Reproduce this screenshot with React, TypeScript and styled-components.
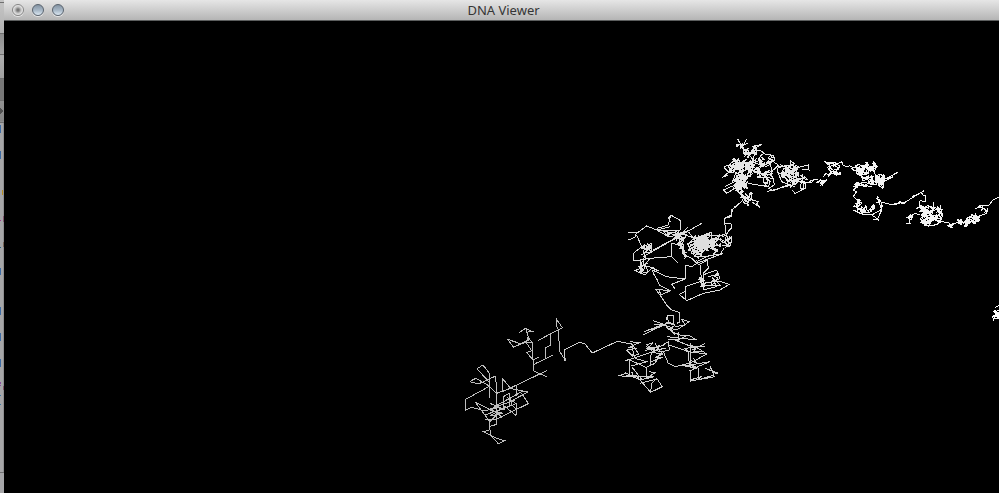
import React from "react";
import styled, { createGlobalStyle } from "styled-components";

const GlobalStyle = createGlobalStyle`
  * { box-sizing: border-box; }
  body { margin: 0; background: #000; font-family: "Noto Sans", sans-serif; overflow: hidden; }
`;

const Desktop = styled.div`
  display: flex;
  min-height: 100vh;
`;

const BackWindow = styled.div`
  flex: 0 0 4px;
  display: flex;
  background: linear-gradient(#c5c5c5 0, #b2b2b2 33px, #8e8e8e 34px, #a5a5a5 54px, #adadad 56px, #a0a0a0 78px, #777 79px, #777 100px, #929292 101px, #858585 121px, #a6a6a8 123px);
`;

const Edge = styled.svg`
  display: block;
  width: 100%;
  height: 100vh;
`;

const Window = styled.main`
  flex: 1;
  min-width: 0;
  display: flex;
  flex-direction: column;
  background: #000;
`;

const TitleBar = styled.header`
  display: grid;
  grid-template-columns: 1fr auto 1fr;
  align-items: center;
  height: 21px;
  padding-left: 8px;
  padding-right: 4px;
  background: linear-gradient(#e6e6e6, #b5b5b5);
  border-bottom: 1px solid #5c5e5e;
`;

const Controls = styled.div`
  display: flex;
  gap: 8px;
`;

const ControlButton = styled.button<{ $kind: "close" | "plain" }>`
  width: 12px;
  height: 12px;
  padding: 0;
  border: 1px solid ${(p) => (p.$kind === "close" ? "#858585" : "#59636e")};
  border-radius: 50%;
  box-shadow: 0 1px 0 #e6e6e6;
  background: ${(p) =>
    p.$kind === "close"
      ? "radial-gradient(circle at 50% 50%, #777 0, #777 1px, #c0c0c0 3px, #ededed 5px)"
      : "linear-gradient(#8594a3, #a9b9c8 55%, #dce8f2)"};
`;

const Title = styled.h1`
  margin: 0;
  color: #353535;
  font-size: 13px;
  font-weight: 400;
  line-height: 20px;
`;

const Viewport = styled.svg`
  flex: 1;
  display: block;
  width: 100%;
  min-height: 0;
  background: #000;
`;

/* Tangle of short steps that drifts from anchor to anchor inside an ellipse. */
function tangle(cx: number, cy: number, rx: number, ry: number, steps: number, seed: number, stride = 11) {
  let s = seed * 7919 + 17;
  const rnd = () => {
    s = (s * 1103515245 + 12345) % 2147483648;
    return s / 2147483648;
  };
  let x = cx;
  let y = cy;
  let ax = cx;
  let ay = cy;
  let d = `M${x} ${y}`;
  for (let i = 0; i < steps; i++) {
    if (i % 6 === 0) {
      const angle = rnd() * Math.PI * 2;
      const reach = Math.pow(rnd(), 0.4);
      ax = cx + Math.cos(angle) * reach * rx * 1.15;
      ay = cy + Math.sin(angle) * reach * ry * 1.15;
    }
    x = Math.round(x + (ax - x) * 0.4 + (rnd() - 0.5) * stride * 1.6);
    y = Math.round(y + (ay - y) * 0.4 + (rnd() - 0.5) * stride * 1.6);
    d += `L${x} ${y}`;
  }
  return d;
}

type Segment = { x: number; y: number; color: string; paths: string[] };

/* Each stretch of the strand uses a local grid of three units per pixel. */
const strand: Segment[] = [
  {
    x: 451, y: 289, color: "#bdbdbd",
    paths: [
      "M158 88L176 112L225 88M158 88L193 100L232 97M193 67L212 55L231 64L215 67L221 85L232 97L232 150M212 55L220 80L213 97L230 122L215 128L235 150L235 182L252 190L275 200M275 182L252 193L160 237M249 92L287 71L287 106L271 113L271 147L240 161M238 163L293 136M235 150L251 142M287 71L322 53L304 27L304 48L311 60L313 123L333 154L328 140L328 120L360 103",
      "M66 176L84 165L103 190L103 263M66 176L103 217M44 215L62 205L103 228M44 215L70 222L122 198L125 250L125 343L103 350M32 268L103 229L125 250L160 237M32 268L32 301L50 292L90 303L125 290M142 205L142 245L165 235L218 246L160 278M142 205L168 237M183 226L183 258M200 250L220 281L125 327L90 330",
      "M61 277L105 335L130 310L61 277M61 277L90 315L180 283M145 296L145 260L163 250L163 292M155 262L185 282L183 316L150 290L105 318L145 310L106 302L125 290L180 270M105 280L150 300L118 290L140 322L120 305M165 260L170 285L186 300M105 335L103 360L85 365L108 377L103 350M108 377L130 401L148 392L125 385L108 377M125 250L160 237M115 292L200 245L218 246",
    ],
  },
  {
    x: 556, y: 259, color: "#cfcfcf",
    paths: [
      "M15 244L13 210L58 187L75 192L97 219L172 184L215 192",
      "M210 185L238 188L205 203L232 205L200 210L218 228L236 222L215 190L222 228L197 210M196 242L235 230L310 205M208 240L210 290L175 287L200 280L240 300L283 290L210 290M210 240L258 262L260 295L285 278L268 275M258 262L285 250L305 215M197 285L230 288L240 300L272 337L307 320L290 295L275 310L272 337M215 260L245 298M215 275L222 292L196 278M240 310L290 297M214 258L260 245L225 235",
      "M258 195L280 188L262 205L300 200L325 185L328 210L305 215L280 210L270 230L270 255M272 245L310 232L285 232L310 222L280 218M285 190L300 215L258 200M310 215L325 250L345 260L385 250L415 265M328 195L385 215L440 222L390 250M322 170L410 180L385 165L355 180M345 180L395 200L435 198L375 205L385 215L388 255L412 265L360 255M390 190L390 265M440 222L415 205L390 195M400 235L412 250L390 240M372 258L450 245L400 265L415 262L390 272L392 303L465 290M390 300L425 290L412 298M415 265L415 298M435 265L475 280L458 278L450 258L462 285L420 298M395 210L435 190",
      "M250 165L300 140L252 155L325 128L290 145M280 122L310 132L282 135M320 105L340 105L340 130L325 128L322 105M310 135L330 140L345 165L330 145L350 150L388 125L365 118L375 135L345 140M318 140L335 155L360 165L385 165L410 180M355 155L355 180L325 178M350 130L357 127L357 97L335 90L322 78L302 48L287 28L332 32L302 45L298 30M332 32L298 15L292 0",
      "M262 195L275 210L300 195L290 210L318 205M255 212L285 203L312 195M318 128L345 135L330 148M390 205L412 200L400 215L425 215",
    ],
  },
  {
    x: 616, y: 184, color: "#dddddd",
    paths: [
      "M140 345L142 330L160 332M112 225L100 205L97 195L140 215L195 222L155 238L165 252M195 222L195 180L215 185L235 172M25 82L50 82L45 97L25 105M50 85L80 63L110 75L150 65M50 90L65 125L40 145L40 165L60 165L62 190L45 197L75 210L95 190L118 198M112 70L145 60L152 30L145 40L152 50M152 30L182 47L180 75L110 75",
      "M70 155L245 55M100 135L210 75L185 85L150 110M110 75L145 95L180 90L205 65M175 75L180 120L155 115L155 155L90 160M155 155L175 175M65 125L95 115L95 140L70 145L75 120L90 130L65 150M60 165L90 160L75 180L85 200L65 205L65 180L105 190M180 120L195 150L190 125L160 115M195 150L215 160L230 175L310 145M205 80L220 100L205 120M180 85L225 100L255 90L305 90M230 165L235 180",
      tangle(166, 98, 32, 18, 70, 3), tangle(80, 128, 20, 20, 28, 5),
      tangle(255, 113, 34, 20, 210, 2), tangle(238, 132, 52, 24, 95, 4), tangle(305, 108, 20, 26, 36, 8),
      tangle(75, 180, 20, 23, 26, 9), tangle(190, 130, 20, 25, 28, 12),
      "M285 98L320 85L315 110L335 95L332 122L305 120M315 85L315 60L312 40L335 35L335 15L355 0M195 245L245 228L240 180M195 245L198 285L178 268L195 260M178 268L200 287L250 265L300 255L328 238L295 228L250 235M248 210L290 195L295 208L265 215M235 180L262 165L265 190L250 205L250 255L290 245L275 215L300 240L250 240M230 170L265 152L300 148L312 130",
      tangle(267, 232, 30, 26, 44, 11),
    ],
  },
  {
    x: 711, y: 109, color: "#e6e6e6",
    paths: [
      tangle(80, 42, 11, 8, 24, 1, 8), "M68 27L78 45L63 43M95 27L85 45L98 40M84 50L86 68L104 75",
      tangle(108, 72, 22, 18, 52, 7), tangle(98, 98, 30, 14, 90, 6), tangle(57, 112, 24, 22, 90, 8), tangle(80, 160, 23, 24, 180, 9), tangle(82, 202, 18, 15, 60, 10), tangle(82, 125, 40, 18, 60, 28),
      tangle(152, 100, 22, 20, 42, 11), tangle(145, 140, 32, 22, 48, 12),
      tangle(228, 138, 24, 24, 120, 13), tangle(215, 118, 28, 13, 45, 14), tangle(250, 155, 20, 18, 34, 30),
      "M110 50L140 43L112 60L135 60L148 70L135 78L148 88L120 95M150 75L168 73L160 85L190 105L175 120M120 100L140 105L165 100L172 125L140 130L120 115M115 125L150 135L165 155L160 170L100 160M125 140L175 145L178 165L160 175L175 182L225 162M155 185L230 165M190 110L235 105L240 115L280 105L282 120L260 118M190 130L200 155L240 170M245 145L270 155L272 175L240 190L232 180M260 155L280 158L288 152L300 148",
      "M40 135L22 142L48 122M60 165L25 180L35 190L60 175M30 170L60 155M38 108L60 90M95 205L130 215L125 222L135 232L110 215M80 215L60 230L52 240L50 255L28 265L30 280L48 282L48 295L35 310",
    ],
  },
  {
    x: 796, y: 129, color: "#f4f4f4",
    paths: [
      "M0 95L12 95L22 99L35 97L42 90L55 89M0 122L15 115L17 100L0 95M70 80L78 70L88 76L112 60L120 45M80 52L100 46L125 35L130 47L142 50L148 47L158 52L185 55",
      tangle(66, 90, 13, 11, 32, 1, 8), tangle(94, 66, 17, 13, 36, 2, 8), tangle(103, 46, 25, 7, 40, 3, 7),
      tangle(185, 57, 21, 16, 130, 4, 8), tangle(215, 50, 20, 16, 44, 5, 9), tangle(210, 83, 22, 19, 60, 6, 8), tangle(243, 91, 15, 14, 110, 7, 8), tangle(163, 103, 7, 10, 18, 8, 6), tangle(192, 104, 24, 5, 22, 44, 6),
      "M250 90L293 67M245 98L280 80L262 85M160 110L190 105L215 110M165 105L190 97L230 105M170 110L160 120L170 125L160 140L172 150L176 160",
      tangle(178, 160, 9, 9, 34, 9, 7), tangle(176, 179, 16, 10, 38, 10, 7), tangle(202, 182, 20, 14, 42, 11, 8), tangle(240, 156, 16, 11, 26, 12, 7),
      "M160 180L185 192L215 195L245 178L247 165M215 195L230 205L238 212M245 180L232 208L218 210M250 158L270 163L290 162L300 155L310 158L330 148",
    ],
  },
  {
    x: 886, y: 159, color: "#f4f4f4",
    paths: [
      "M12 71L25 72L30 68L42 72L48 65L102 32M65 50L90 40M95 38L98 45L108 48L105 65L90 62L88 78M155 125L175 128L180 130M190 132L210 125",
      tangle(98, 78, 14, 10, 26, 1, 7), tangle(108, 100, 23, 18, 90, 2, 8), tangle(140, 95, 15, 14, 60, 3, 8), tangle(115, 122, 34, 13, 100, 4, 8), tangle(60, 112, 9, 16, 22, 5, 7),
      "M48 132L60 130L55 110L75 100L90 105M130 67L130 90M150 75L158 105L150 128",
      tangle(184, 134, 7, 8, 22, 6, 6), tangle(222, 128, 18, 8, 50, 7, 7), tangle(246, 115, 20, 9, 60, 8, 7), tangle(240, 128, 26, 8, 46, 9, 7), tangle(280, 88, 13, 7, 20, 10, 7),
      "M262 110L290 100L292 85M255 85L280 80M270 78L298 75L308 60L330 50",
    ],
  },
  {
    x: 966, y: 269, color: "#ffffff",
    paths: [tangle(84, 70, 9, 11, 80, 1, 7), "M75 52L87 46M67 78L72 90M75 80L69 92M88 75L80 82"],
  },
];

const marks: [number, number, number, string][] = [
  [0, 125, 8, "#3d6ca5"], [0, 151, 8, "#3d6ca5"], [2, 190, 5, "#b58c20"],
  [3, 216, 6, "#8a3260"], [0, 220, 1, "#a03a90"], [3, 242, 5, "#775538"],
  [0, 247, 1, "#296080"], [0, 268, 7, "#3d6ca5"], [0, 307, 8, "#3d6ca5"],
  [0, 333, 8, "#3d6ca5"], [0, 359, 8, "#3d6ca5"], [0, 382, 2, "#8b4fa0"],
  [3, 386, 4, "#852c4c"], [0, 385, 1, "#8b4fa0"], [0, 395, 1, "#397aa5"], [0, 404, 1, "#397aa5"],
];

export default function App() {
  return (
    <>
      <GlobalStyle />
      <Desktop>
        <BackWindow>
          <Edge aria-hidden="true" shapeRendering="crispEdges">
            {[2, 33, 54, 78, 100, 122, 472].map((y) => (
              <rect key={y} y={y} width="4" height="1" fill="#707070" />
            ))}
            <path d="M0 108L4 111L0 114Z" fill="#505050" />
            {marks.map(([x, y, h, color]) => (
              <rect key={`${x}-${y}`} x={x} y={y} width="1" height={h} fill={color} />
            ))}
            <rect x="3" y="123" width="1" height="349" fill="#77777a" fillOpacity="0.5" />
          </Edge>
        </BackWindow>
        <Window>
          <TitleBar>
            <Controls>
              <ControlButton type="button" aria-label="Close" $kind="close" />
              <ControlButton type="button" aria-label="Minimize" $kind="plain" />
              <ControlButton type="button" aria-label="Zoom" $kind="plain" />
            </Controls>
            <Title>DNA Viewer</Title>
          </TitleBar>
          <Viewport role="img" aria-label="DNA strand" shapeRendering="crispEdges">
            {strand.map((part) => (
              <g
                key={`${part.x}-${part.y}`}
                transform={`translate(${part.x} ${part.y}) scale(${1 / 3})`}
                fill="none"
                stroke={part.color}
                strokeWidth="3"
              >
                {part.paths.map((d, i) => (
                  <path key={i} d={d} />
                ))}
              </g>
            ))}
          </Viewport>
        </Window>
      </Desktop>
    </>
  );
}
